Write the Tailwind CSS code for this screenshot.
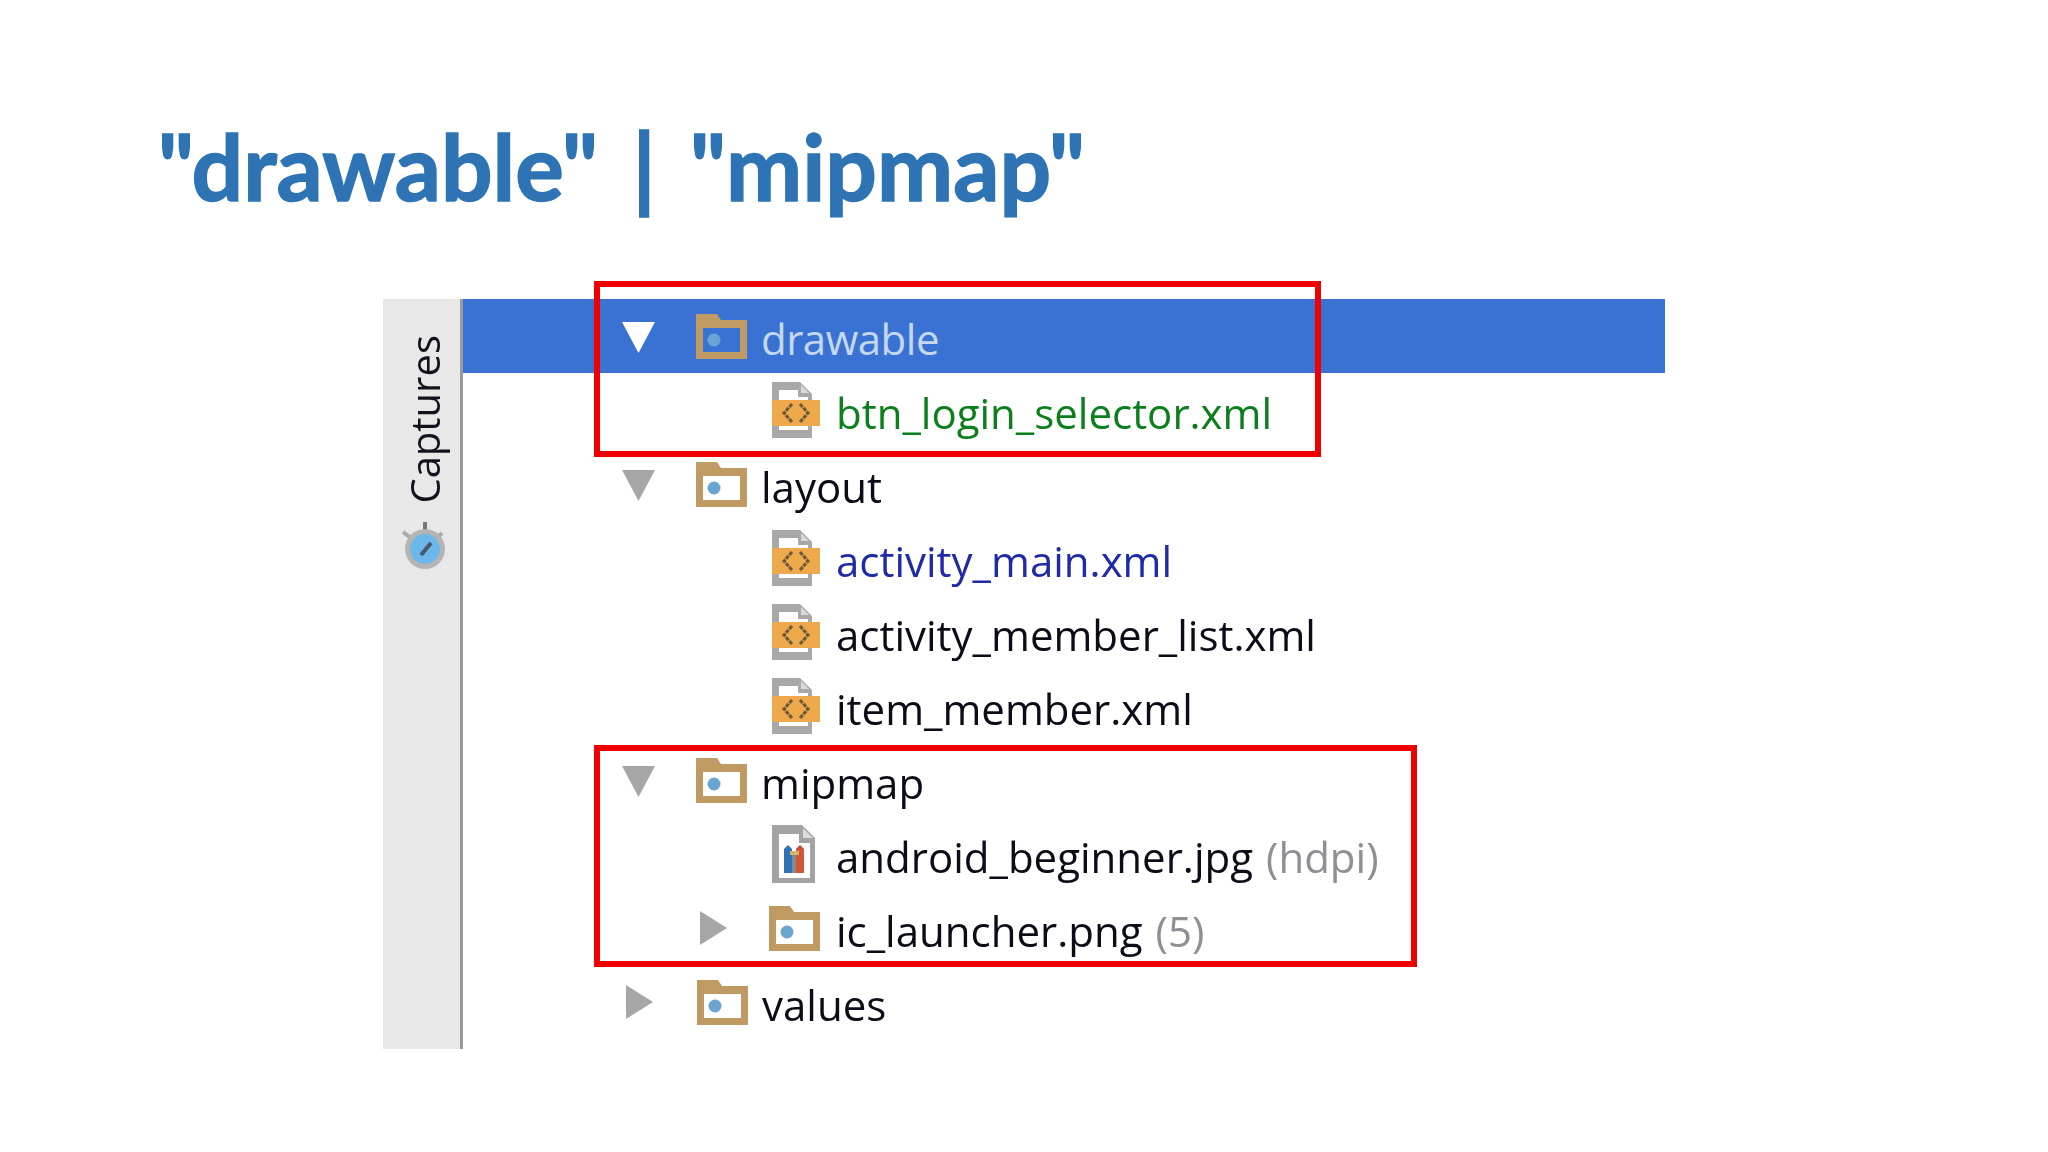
<!DOCTYPE html>
<html lang="en">
<head>
    <meta charset="UTF-8">
    <title>drawable | mipmap</title>
    <script src="https://cdn.jsdelivr.net/npm/@tailwindcss/browser@4"></script>
</head>
<body class="bg-white w-[2048px] h-[1152px] overflow-hidden font-['Lato',sans-serif]">

    <svg class="hidden">
        <symbol id="folder" viewBox="0 0 51 45">
            <path d="M0 0H21L25 6H51V45H0Z" fill="#c09a63"/>
            <rect x="7" y="14" width="37" height="24" fill="#fff"/>
            <circle cx="18" cy="26" r="6.500" fill="#6aa5d2"/>
        </symbol>
        <symbol id="folder-sel" viewBox="0 0 51 45">
            <path d="M0 0H21L25 6H51V45H0Z" fill="#c09a63"/>
            <rect x="7" y="14" width="37" height="24" fill="#3a72d4"/>
            <circle cx="18" cy="26" r="6.500" fill="#6aa5d2"/>
        </symbol>
        <symbol id="xml" viewBox="0 0 48 56">
            <path d="M0 0H28L40 12V56H0Z" fill="#a8a8a8"/>
            <path d="M7 8H26V15H36V48H7Z" fill="#fff"/>
            <path d="M29 3L37 11H29Z" fill="#d9d9d9"/>
            <rect x="0" y="18" width="48" height="26" fill="#eea94c"/>
            <path d="M20 22L12 31L20 40M28 22L36 31L28 40" fill="none" stroke="#6a5838" stroke-width="3" stroke-dasharray="4 1"/>
        </symbol>
        <symbol id="image" viewBox="0 0 43 58">
            <path d="M0 0H30L43 13V58H0Z" fill="#a3a3a3"/>
            <path d="M7 9H27V18H38V53H7Z" fill="#fff"/>
            <path d="M31 3L41 13H31Z" fill="#dcdcdc"/>
            <rect x="12" y="24" width="8" height="24" fill="#2f72b3"/>
            <path d="M12 24L16 20L20 24Z" fill="#2f72b3"/>
            <rect x="20" y="27" width="4" height="21" fill="#7f8c90"/>
            <rect x="24" y="24" width="8" height="24" fill="#d0573a"/>
            <path d="M24 24L28 20L32 24Z" fill="#c8452f"/>
            <rect x="18" y="26" width="9" height="4" fill="#d9b36a"/>
        </symbol>
        <symbol id="arrow-down" viewBox="0 0 33 31">
            <path d="M0 0H33L16.500 31Z"/>
        </symbol>
        <symbol id="arrow-right" viewBox="0 0 27 34">
            <path d="M0 0L27 17L0 34Z"/>
        </symbol>
    </svg>

    <h1 class="pl-[158px] pt-[110px] h-[299px] text-[91px] leading-[112px] [word-spacing:12px] font-bold [-webkit-text-stroke:1.5px_#2e74b5] text-[#2e74b5]">"drawable" | "mipmap"</h1>

    <div class="relative ml-[383px] w-[1282px] h-[750px] flex">
        <!-- side tool strip -->
        <div class="w-[80px] h-full shrink-0 bg-[#e8e8e8] border-r-[3px] border-[#9a9a9a] flex flex-col items-center pt-[36px] pl-[7px] gap-[18px]">
            <span class="[writing-mode:vertical-rl] rotate-180 text-[40px] leading-[44px] text-[#12121f] font-['Open_Sans',sans-serif] blur-[0.4px]">Captures</span>
            <svg class="w-[46px] h-[48px] blur-[0.5px]" viewBox="0 0 46 48">
                <rect x="21" y="0" width="4" height="9" fill="#777"/>
                <path d="M1 10L9 16M40 11L36 15" stroke="#aaa" stroke-width="4"/>
                <circle cx="23" cy="27" r="20" fill="#b4b4b4"/>
                <circle cx="23" cy="27" r="15" fill="#6db8ea"/>
                <path d="M19 33L29 21" stroke="#46586a" stroke-width="4"/>
            </svg>
        </div>

        <!-- project tree -->
        <div class="flex-1 text-[42px] font-['Open_Sans',sans-serif] text-[#0c0c18] blur-[0.4px]">
            <div class="h-[74px] bg-[#3a72d4] pl-[159px] flex items-center text-[#c3d8ef]">
                <svg class="w-[33px] h-[31px] mt-[2px] fill-white"><use href="#arrow-down"/></svg>
                <svg class="w-[51px] h-[45px] ml-[41px]"><use href="#folder-sel"/></svg>
                <span class="ml-[14px] pt-[5px] tracking-[-0.5px]">drawable</span>
            </div>
            <div class="h-[74px] pl-[309px] flex items-center text-[#0a7f1c]">
                <svg class="w-[48px] h-[56px]"><use href="#xml"/></svg>
                <span class="ml-[16px] pt-[5px]">btn_login_selector.xml</span>
            </div>
            <div class="h-[74px] pl-[159px] flex items-center">
                <svg class="w-[33px] h-[31px] mt-[2px] fill-[#a6a6a6]"><use href="#arrow-down"/></svg>
                <svg class="w-[51px] h-[45px] ml-[41px]"><use href="#folder"/></svg>
                <span class="ml-[14px] pt-[5px]">layout</span>
            </div>
            <div class="h-[74px] pl-[309px] flex items-center text-[#1f2aa8]">
                <svg class="w-[48px] h-[56px]"><use href="#xml"/></svg>
                <span class="ml-[16px] pt-[5px]">activity_main.xml</span>
            </div>
            <div class="h-[74px] pl-[309px] flex items-center">
                <svg class="w-[48px] h-[56px]"><use href="#xml"/></svg>
                <span class="ml-[16px] pt-[5px]">activity_member_list.xml</span>
            </div>
            <div class="h-[74px] pl-[309px] flex items-center">
                <svg class="w-[48px] h-[56px]"><use href="#xml"/></svg>
                <span class="ml-[16px] pt-[5px]">item_member.xml</span>
            </div>
            <div class="h-[74px] pl-[159px] flex items-center">
                <svg class="w-[33px] h-[31px] mt-[2px] fill-[#a6a6a6]"><use href="#arrow-down"/></svg>
                <svg class="w-[51px] h-[45px] ml-[41px]"><use href="#folder"/></svg>
                <span class="ml-[14px] pt-[5px]">mipmap</span>
            </div>
            <div class="h-[74px] pl-[309px] flex items-center">
                <svg class="w-[43px] h-[58px]"><use href="#image"/></svg>
                <span class="ml-[21px] pt-[5px]">android_beginner.jpg</span>
                <span class="ml-[13px] pt-[5px] text-[#8f8f96]">(hdpi)</span>
            </div>
            <div class="h-[74px] pl-[237px] flex items-center">
                <svg class="w-[27px] h-[34px] fill-[#a6a6a6]"><use href="#arrow-right"/></svg>
                <svg class="w-[51px] h-[45px] ml-[42px]"><use href="#folder"/></svg>
                <span class="ml-[16px] pt-[5px]">ic_launcher.png</span>
                <span class="ml-[13px] pt-[5px] text-[#8f8f96]">(5)</span>
            </div>
            <div class="h-[74px] pl-[163px] flex items-center">
                <svg class="w-[27px] h-[34px] fill-[#a6a6a6]"><use href="#arrow-right"/></svg>
                <svg class="w-[51px] h-[45px] ml-[44px]"><use href="#folder"/></svg>
                <span class="ml-[14px] pt-[5px]">values</span>
            </div>
        </div>

        <!-- red highlight boxes drawn over the tree -->
        <div class="absolute left-[211px] top-[-18px] w-[727px] h-[176px] border-[6px] border-[#f00000]"></div>
        <div class="absolute left-[211px] top-[446px] w-[823px] h-[222px] border-[6px] border-[#f00000]"></div>
    </div>

</body>
</html>
